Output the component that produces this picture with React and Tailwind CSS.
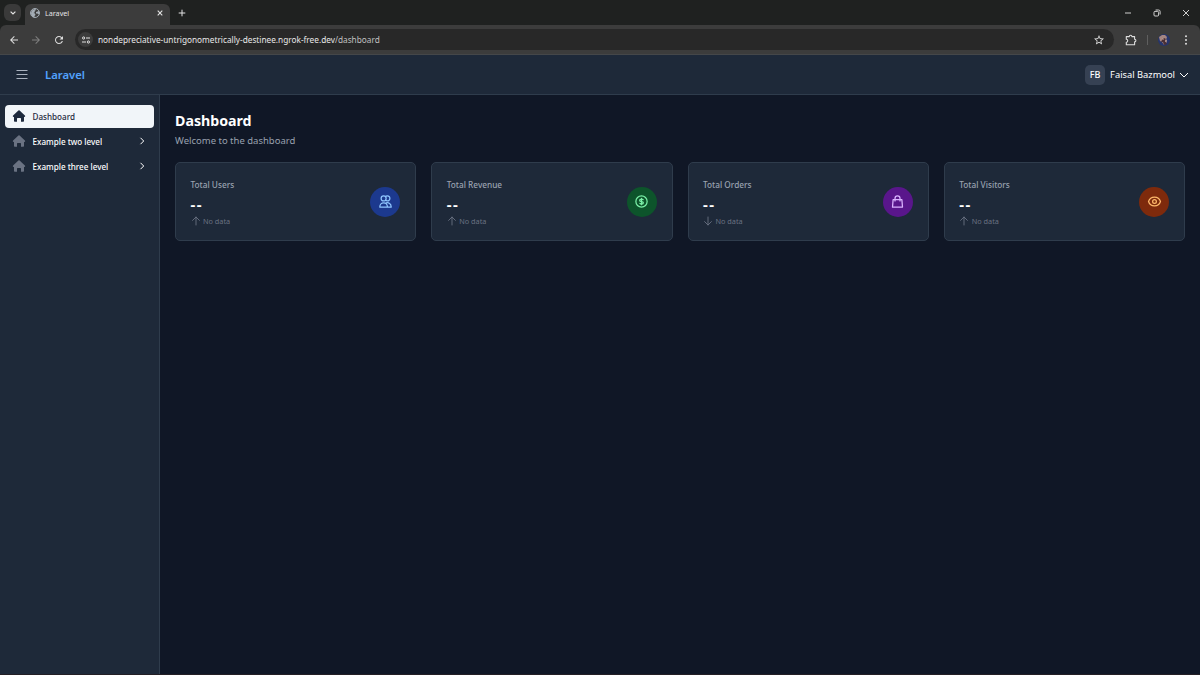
import React from 'react';
import {
  HiOutlineCurrencyDollar,
  HiOutlineEye,
  HiOutlineShoppingBag,
  HiOutlineUsers,
} from 'react-icons/hi';
import { MdArrowBack, MdArrowForward, MdRefresh, MdStarBorder } from 'react-icons/md';

const stats = [
  { label: 'Total Users', icon: HiOutlineUsers, up: true, color: 'bg-blue-900 text-blue-300' },
  { label: 'Total Revenue', icon: HiOutlineCurrencyDollar, up: true, color: 'bg-green-900 text-green-300' },
  { label: 'Total Orders', icon: HiOutlineShoppingBag, up: false, color: 'bg-purple-900 text-purple-300' },
  { label: 'Total Visitors', icon: HiOutlineEye, up: true, color: 'bg-orange-900 text-orange-300' },
];

const menu = [
  { label: 'Dashboard', active: true },
  { label: 'Example two level', active: false },
  { label: 'Example three level', active: false },
];

const HomeIcon = ({ className }) => (
  <svg viewBox="0 0 14 14" fill="currentColor" className={className}>
    <path d="M6.4 1.4a.9.9 0 0 1 1.2 0l5.3 5c.6.6.2 1.5-.6 1.5H12v4.2c0 .4-.3.7-.7.7H9V9.6c0-.4-.3-.7-.7-.7H5.7c-.4 0-.7.3-.7.7v3.2H2.7c-.4 0-.7-.3-.7-.7V7.9h-.3c-.8 0-1.2-.9-.6-1.5z" />
  </svg>
);

const TrendArrow = ({ up }) => (
  <svg
    viewBox="0 0 10 10"
    fill="none"
    stroke="currentColor"
    strokeWidth="0.9"
    strokeLinecap="round"
    strokeLinejoin="round"
    className={up ? 'size-2.5' : 'size-2.5 rotate-180'}
  >
    <path d="M5 9V1M1.6 4.4 5 1l3.4 3.4" />
  </svg>
);

const TabStrip = () => (
  <div className="flex h-[25px] items-end bg-[#1f2120]">
    <button className="mb-1 ml-1 flex size-[17px] items-center justify-center rounded-md bg-[#3a3a3a]">
      <svg viewBox="0 0 8 8" fill="none" stroke="#e3e3e3" strokeWidth="1.2" className="size-2">
        <path d="M1.6 2.6 4 5l2.4-2.4" />
      </svg>
    </button>
    <div className="ml-1 flex h-[21px] w-[145px] items-center rounded-t-md bg-[#3c3c3c] pr-1.5 pb-1 pl-[5px]">
      <svg viewBox="0 0 20 20" className="size-[10px]">
        <circle cx="10" cy="10" r="9" fill="#3c3c3c" stroke="#a4adb5" strokeWidth="2" />
        <path d="M2 11c0-6 4-9 9-9l1 2-3 2 1 2-3 2 3 1 1 3-2 2v3C5 18 2 15 2 11zM12 8l6-2c1 4 0 6-1 7l-2-2-3 0z" fill="#a4adb5" />
      </svg>
      <span className="mt-px ml-[5px] flex-1 text-[7.2px] text-[#e3e3e3]">Laravel</span>
      <svg viewBox="0 0 8 8" stroke="#e3e3e3" strokeWidth="1.1" className="size-2">
        <path d="m1.7 1.7 4.6 4.6m0-4.6L1.7 6.3" />
      </svg>
    </div>
    <svg viewBox="0 0 8 8" stroke="#e3e3e3" strokeWidth="1" className="mb-[8.5px] ml-2 size-2">
      <path d="M4 .7v6.6M.7 4h6.6" />
    </svg>
    <div className="mr-[10.5px] mb-[8.5px] ml-auto flex items-center gap-[21px]">
      <svg viewBox="0 0 8 8" stroke="#e3e3e3" strokeWidth="0.9" className="size-2">
        <path d="M1 4h6" />
      </svg>
      <svg viewBox="0 0 8 8" fill="none" stroke="#e3e3e3" strokeWidth="0.9" className="size-2">
        <rect x="1" y="2.4" width="4.6" height="4.6" rx="1" />
        <path d="M2.6 1h3a1.5 1.5 0 0 1 1.5 1.5v3" />
      </svg>
      <svg viewBox="0 0 8 8" stroke="#e3e3e3" strokeWidth="0.9" className="size-2">
        <path d="m1 1 6 6m0-6L1 7" />
      </svg>
    </div>
  </div>
);

const AddressBar = () => (
  <div className="bg-[#1f2120]">
    <div className="flex h-[30px] items-center rounded-t-md border-b border-[#454749] bg-[#3c3c3c] pl-2">
      <MdArrowBack className="size-3 text-[#dedede]" />
      <MdArrowForward className="ml-[10px] size-3 text-[#7f7f7f]" />
      <MdRefresh className="ml-[11px] size-3 text-[#dedede]" />
      <div className="ml-[10px] flex h-[21px] w-[1039px] items-center rounded-full bg-[#282828] pr-[9px] pl-[3px]">
        <span className="flex size-[15px] items-center justify-center rounded-full bg-[#3c3c3c]">
          <svg viewBox="0 0 10 10" fill="none" stroke="#e3e3e3" strokeWidth="1" className="size-[10px]">
            <circle cx="2.6" cy="3" r="1.1" />
            <path d="M5 3h4M1 7h4" />
            <circle cx="7.4" cy="7" r="1.1" />
          </svg>
        </span>
        <span className="mt-0.5 ml-[5px] flex-1 text-[8.25px] text-[#e8e8e8]">
          nondepreciative-untrigonometrically-destinee.ngrok-free.dev<span className="text-[#c0c0c0]">/dashboard</span>
        </span>
        <MdStarBorder className="size-3 text-[#dedede]" />
      </div>
      <svg viewBox="0 0 12 12" fill="none" stroke="#dedede" strokeWidth="1.1" strokeLinejoin="round" className="ml-[10.5px] size-3">
        <path d="M1.3 2.6h3a1.3 1.3 0 0 1 2.6 0h2.7v2.7a1.3 1.3 0 0 1 0 2.6v2.8H1.3V8.2a1.4 1.4 0 0 0 0-2.9z" />
      </svg>
      <span className="ml-[10px] h-[10px] w-px bg-[#5f5f5f]" />
      <svg viewBox="0 0 12 12" className="ml-[10px] size-3">
        <circle cx="6" cy="6" r="6" fill="#26356c" />
        <path d="M1 3l3-2 3 0 2 2-1 3 1 2-3 3-2-3-2-1z" fill="#a58682" />
        <path d="M6 4l2 1-1 2 2 3-3 1-1-3-2 0 1-2z" fill="#4a2f35" />
        <path d="M4 4l2 1-1 1zM8 5l1 2-2 1z" fill="#c0a098" />
      </svg>
      <svg viewBox="0 0 12 12" fill="#dedede" className="ml-[10.5px] size-3">
        <circle cx="6" cy="2.2" r="1" />
        <circle cx="6" cy="6" r="1" />
        <circle cx="6" cy="9.8" r="1" />
      </svg>
    </div>
  </div>
);

const Header = () => (
  <header className="flex h-10 items-center border-b border-[#2f3c4c] bg-gray-800 pr-[11px] pl-4">
    <svg viewBox="0 0 12 12" stroke="#aab2bf" strokeWidth="1" className="size-3">
      <path d="M.5 1.5h11M.5 5.5h11M.5 9.5h11" />
    </svg>
    <span className="mt-0.5 ml-[17px] text-[11.3px] font-semibold text-blue-400">Laravel</span>
    <div className="ml-auto flex items-center">
      <span className="flex size-5 items-center justify-center rounded-[5px] bg-gray-700 text-[9px] font-medium text-white">
        FB
      </span>
      <span className="ml-[5px] text-[9.3px] text-white">Faisal Bazmool</span>
      <svg viewBox="0 0 10 10" fill="none" stroke="#fff" strokeWidth="1" className="ml-1 size-[10px]">
        <path d="m1 3 4 4 4-4" />
      </svg>
    </div>
  </header>
);

const Sidebar = () => (
  <aside className="flex w-40 flex-col gap-[2.5px] border-r border-[#2f3c4c] bg-gray-800 px-[5px] pt-[10px]">
    {menu.map((item) => (
      <a
        key={item.label}
        className={
          item.active
            ? 'flex h-[22.5px] items-center rounded bg-slate-100 px-[7px] text-slate-800'
            : 'flex h-[22.5px] items-center rounded px-[7px] text-white'
        }
      >
        <HomeIcon className={item.active ? 'size-[14px]' : 'size-[14px] text-gray-500'} />
        <span className="mt-0.5 ml-[6.5px] flex-1 text-[8.1px] font-medium">{item.label}</span>
        {!item.active && (
          <svg viewBox="0 0 8 8" fill="none" stroke="currentColor" strokeWidth="1" className="mr-[1.5px] size-2">
            <path d="m2.5.8 3.2 3.2-3.2 3.2" />
          </svg>
        )}
      </a>
    ))}
  </aside>
);

const StatCard = ({ label, icon: Icon, up, color }) => (
  <div className="flex h-[79px] items-center justify-between rounded-[5px] border border-[#2f3c4c] bg-gray-800 pr-[15px] pl-[14.5px]">
    <div className="pt-px">
      <p className="text-[8.25px] leading-[14.5px] font-medium text-gray-400">{label}</p>
      <p className="mt-[2px] text-[15px] leading-5 font-bold tracking-[1.4px] text-white">--</p>
      <p className="mt-[2px] flex items-center gap-[2.5px] text-[7.3px] leading-[10px] text-gray-500">
        <TrendArrow up={up} />
        No data
      </p>
    </div>
    <span className={`flex size-[30px] items-center justify-center rounded-full ${color}`}>
      <Icon className="size-[15px]" />
    </span>
  </div>
);

const App = () => {
  return (
    <div className="flex h-[675px] w-[1200px] flex-col overflow-hidden bg-[#101726] font-['Noto_Sans',sans-serif]">
      <TabStrip />
      <AddressBar />
      <Header />
      <div className="flex flex-1">
        <Sidebar />
        <main className="flex-1 px-[15px] pt-[15px]">
          <h1 className="text-[14.2px] leading-[22px] font-bold text-white">Dashboard</h1>
          <p className="mt-px text-[9.5px] leading-[15px] text-gray-400">Welcome to the dashboard</p>
          <div className="mt-[14px] grid grid-cols-4 gap-[15px]">
            {stats.map((stat) => (
              <StatCard key={stat.label} {...stat} />
            ))}
          </div>
        </main>
      </div>
      <div className="h-px bg-[#241f25]" />
    </div>
  );
};

export default App;
